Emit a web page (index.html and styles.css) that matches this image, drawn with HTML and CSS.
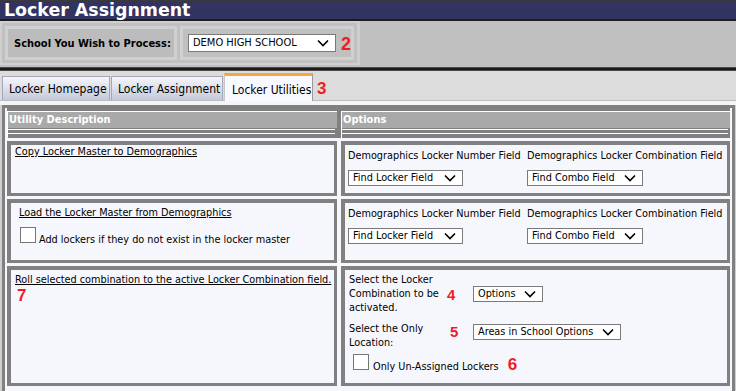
FILE: index.html
```html
<!DOCTYPE html>
<html>
<head>
<meta charset="utf-8">
<title>Locker Assignment</title>
<link rel="stylesheet" href="styles.css">
</head>
<body>
<div class="page">
  <div class="titlebar">Locker Assignment</div>
  <div class="schoolbar">
    <div class="schooltable">
      <div class="scell label">School You Wish to Process:</div>
      <div class="scell selcell">
        <div class="select school"><span>DEMO HIGH SCHOOL</span><svg class="chev" viewBox="0 0 12 8" width="12" height="8"><path d="M1 1.5 L6 6.5 L11 1.5" fill="none" stroke="#000" stroke-width="1.6"/></svg></div>
        <span class="num num-2">2</span>
      </div>
    </div>
  </div>
  <div class="divider"></div>
  <div class="tabbar">
    <div class="tab t1">Locker Homepage</div>
    <div class="tab t2">Locker Assignment</div>
    <div class="tab active">Locker Utilities</div>
    <span class="num num-3">3</span>
  </div>
  <div class="band"></div>
  <div class="content">
    <div class="thead">
      <div class="th">Utility Description</div>
      <div class="th">Options</div>
      <div class="spacer"><i></i><i></i></div>
      <div class="spacer"><i></i><i></i></div>
    </div>
    <div class="rows">
      <div class="box b-copy">
        <a class="link">Copy Locker Master to Demographics</a>
      </div>
      <div class="box opts">
        <div class="field">
          <div class="flabel">Demographics Locker Number Field</div>
          <div class="select w-locker"><span>Find Locker Field</span><svg class="chev" viewBox="0 0 12 8" width="12" height="8"><path d="M1 1.5 L6 6.5 L11 1.5" fill="none" stroke="#000" stroke-width="1.6"/></svg></div>
        </div>
        <div class="field">
          <div class="flabel">Demographics Locker Combination Field</div>
          <div class="select w-combo"><span>Find Combo Field</span><svg class="chev" viewBox="0 0 12 8" width="12" height="8"><path d="M1 1.5 L6 6.5 L11 1.5" fill="none" stroke="#000" stroke-width="1.6"/></svg></div>
        </div>
      </div>

      <div class="box b-load">
        <a class="link">Load the Locker Master from Demographics</a>
        <label class="check check-add"><span class="cb"></span><span>Add lockers if they do not exist in the locker master</span></label>
      </div>
      <div class="box opts">
        <div class="field">
          <div class="flabel">Demographics Locker Number Field</div>
          <div class="select w-locker"><span>Find Locker Field</span><svg class="chev" viewBox="0 0 12 8" width="12" height="8"><path d="M1 1.5 L6 6.5 L11 1.5" fill="none" stroke="#000" stroke-width="1.6"/></svg></div>
        </div>
        <div class="field">
          <div class="flabel">Demographics Locker Combination Field</div>
          <div class="select w-combo"><span>Find Combo Field</span><svg class="chev" viewBox="0 0 12 8" width="12" height="8"><path d="M1 1.5 L6 6.5 L11 1.5" fill="none" stroke="#000" stroke-width="1.6"/></svg></div>
        </div>
      </div>

      <div class="box b-roll">
        <a class="link">Roll selected combination to the active Locker Combination field.</a>
        <div class="num num-7">7</div>
      </div>
      <div class="box roll">
        <div class="rollrow ra">
          <div class="rlabel">Select the Locker Combination to be activated.</div>
          <span class="num num-4">4</span>
          <div class="select w-options"><span>Options</span><svg class="chev" viewBox="0 0 12 8" width="12" height="8"><path d="M1 1.5 L6 6.5 L11 1.5" fill="none" stroke="#000" stroke-width="1.6"/></svg></div>
        </div>
        <div class="rollrow rb">
          <div class="rlabel">Select the Only Location:</div>
          <span class="num num-5">5</span>
          <div class="select w-areas"><span>Areas in School Options</span><svg class="chev" viewBox="0 0 12 8" width="12" height="8"><path d="M1 1.5 L6 6.5 L11 1.5" fill="none" stroke="#000" stroke-width="1.6"/></svg></div>
        </div>
        <label class="check check-un"><span class="cb"></span><span>Only Un-Assigned Lockers</span><span class="num num-6">6</span></label>
      </div>
    </div>
  </div>
</div>
</body>
</html>
```

FILE: styles.css
```css
html, body {
  margin: 0;
  padding: 0;
  background: #cfcfcf;
}
body {
  font-family: "DejaVu Sans Condensed", "DejaVu Sans", sans-serif;
  font-size: 10.8px;
  color: #000;
}
.page {
  width: 736px;
  height: 391px;
  overflow: hidden;
}
.titlebar {
  height: 18px;
  background: #333362;
  border-top: 1px solid #3a3a3a;
  border-bottom: 2px solid #1c1c1c;
  color: #fff;
  font-family: "DejaVu Sans", sans-serif;
  font-weight: bold;
  font-size: 17.4px;
  line-height: 19px;
  padding-left: 4px;
  white-space: nowrap;
}
.schoolbar {
  height: 46px;
  background: #c0c0c0;
  display: flex;
  align-items: flex-start;
}
.schooltable {
  display: flex;
  gap: 3px;
  padding: 3px;
  border: 2px solid #cfcfcf;
  border-right-width: 3px;
  height: 34px;
}
.scell {
  border: 3px solid #d0d0d0;
  display: flex;
  align-items: center;
}
.label {
  width: 160px;
  padding-left: 6px;
  font-size: 11px;
  font-weight: bold;
  background: #bcbcbc;
}
.selcell {
  width: 163px;
  padding-left: 5px;
  position: relative;
}
.select {
  background: #fff;
  border: 1px solid #7a7a7a;
  height: 14px;
  line-height: 14px;
  padding-left: 4px;
  padding-right: 6px;
  display: flex;
  align-items: center;
  justify-content: space-between;
  white-space: nowrap;
}
.chev {
  flex: none;
}
.school {
  width: 136px;
  height: 16px;
  font-size: 11px;
}
.num {
  color: #f01c24;
  font-family: "Liberation Sans", Arial, sans-serif;
  font-weight: bold;
  font-size: 17px;
  line-height: 17px;
}
.num-2 {
  position: absolute;
  left: 158px;
  top: 7px;
  font-size: 18px;
}
.divider {
  height: 2px;
  background: #1a1a1a;
  border-top: 1px solid #4a4a4a;
  border-bottom: 1px solid #4a4a4a;
}
.tabbar {
  height: 29px;
  background: #dcdcdc;
  border-bottom: 1px solid #bdbdbd;
  display: flex;
  align-items: flex-end;
  padding-left: 2px;
}
.tab {
  box-sizing: border-box;
  height: 24px;
  line-height: 21px;
  padding-top: 2px;
  font-size: 12px;
  white-space: nowrap;
  overflow: hidden;
  padding-left: 6px;
  border: 1px solid #a3a7b6;
  border-bottom: none;
  background: linear-gradient(#f5f6fb, #dfe2ec 45%, #c4c9da);
}
.t1 {
  width: 108px;
  margin-right: 1px;
}
.t2 {
  width: 112px;
  margin-right: 1px;
}
.tab.active {
  width: 89px;
  height: 28px;
  padding-top: 4px;
  padding-left: 7px;
  background: #f8f9fe;
  border-top: 3px solid #f6a73b;
  border-left: 1px solid #c8c8c8;
  border-right: 1px solid #9a9a9a;
  margin-bottom: -1px;
}
.num-3 {
  margin-left: 4px;
  align-self: center;
  margin-top: 5px;
}
.band {
  height: 4px;
  background: #f4f5f9;
}
.content {
  margin-left: 2px;
  width: 723px;
  border: 3px solid #808080;
  border-bottom: none;
  background: #f6f7fd;
  padding: 0 2px;
  height: 300px;
}
.thead {
  display: grid;
  grid-template-columns: 330px 389px;
  column-gap: 4px;
  background: #808080;
  padding-top: 3px;
}
.th {
  background: #a9a9a9;
  border-top: 1px solid #fff;
  border-left: 1px solid #fff;
  color: #fff;
  font-weight: bold;
  font-size: 11px;
  height: 16px;
  line-height: 16px;
  padding-left: 1px;
}
.spacer {
  box-sizing: border-box;
  height: 10px;
  padding-top: 1px;
  border-left: 1px solid #fff;
  display: flex;
  flex-direction: column;
  gap: 3px;
}
.spacer i {
  display: block;
  height: 1px;
  background: #fff;
  margin-right: 2px;
}
.rows {
  margin-top: 3px;
  display: grid;
  grid-template-columns: 330px 389px;
  grid-template-rows: 55px 64px 120px;
  column-gap: 4px;
  row-gap: 3px;
}
.box {
  box-sizing: border-box;
  background: #f6f7fd;
  border-style: solid;
  border-color: #808080;
  border-width: 4px 3px 3px 4px;
  padding: 0 4px;
}
.link {
  display: block;
  text-decoration: underline;
  color: #000;
  line-height: 14px;
  white-space: nowrap;
}
.b-copy {
  padding-top: 0;
}
.b-load {
  padding: 3px 8px 0;
}
.b-roll {
  padding-top: 3px;
}
.check {
  display: flex;
  align-items: baseline;
  line-height: 14px;
}
.check-add {
  margin-top: 7px;
  margin-left: 1px;
}
.cb {
  box-sizing: border-box;
  width: 16px;
  height: 16px;
  border: 1px solid #767676;
  background: #fff;
  margin-right: 3px;
  flex: none;
}
.opts {
  display: grid;
  grid-template-columns: 179px auto;
  padding: 4px 3px 0;
}
.field {
  display: flex;
  flex-direction: column;
  align-items: flex-start;
  gap: 7px;
}
.flabel {
  white-space: nowrap;
  line-height: 14px;
}
.w-locker {
  width: 103px;
}
.w-combo {
  width: 104px;
}
.num-7 {
  margin-left: 2px;
}
.roll {
  padding: 3px 4px 0;
}
.rollrow {
  display: flex;
}
.ra {
  align-items: center;
}
.rb {
  align-items: flex-start;
  margin-top: 7px;
}
.rlabel {
  width: 98px;
  line-height: 14px;
}
.num-4, .num-5 {
  width: 26px;
  font-size: 15px;
  line-height: 15px;
}
.rb .num-5 {
  margin-top: 2px;
  padding-left: 3px;
  width: 23px;
}
.rb .select {
  margin-top: 2px;
}
.w-options {
  width: 58px;
}
.w-areas {
  width: 136px;
}
.check-un {
  margin-left: 4px;
  margin-top: 4px;
}
.check-un .cb {
  margin-right: 4px;
}
.num-6 {
  margin-left: 9px;
}
```
